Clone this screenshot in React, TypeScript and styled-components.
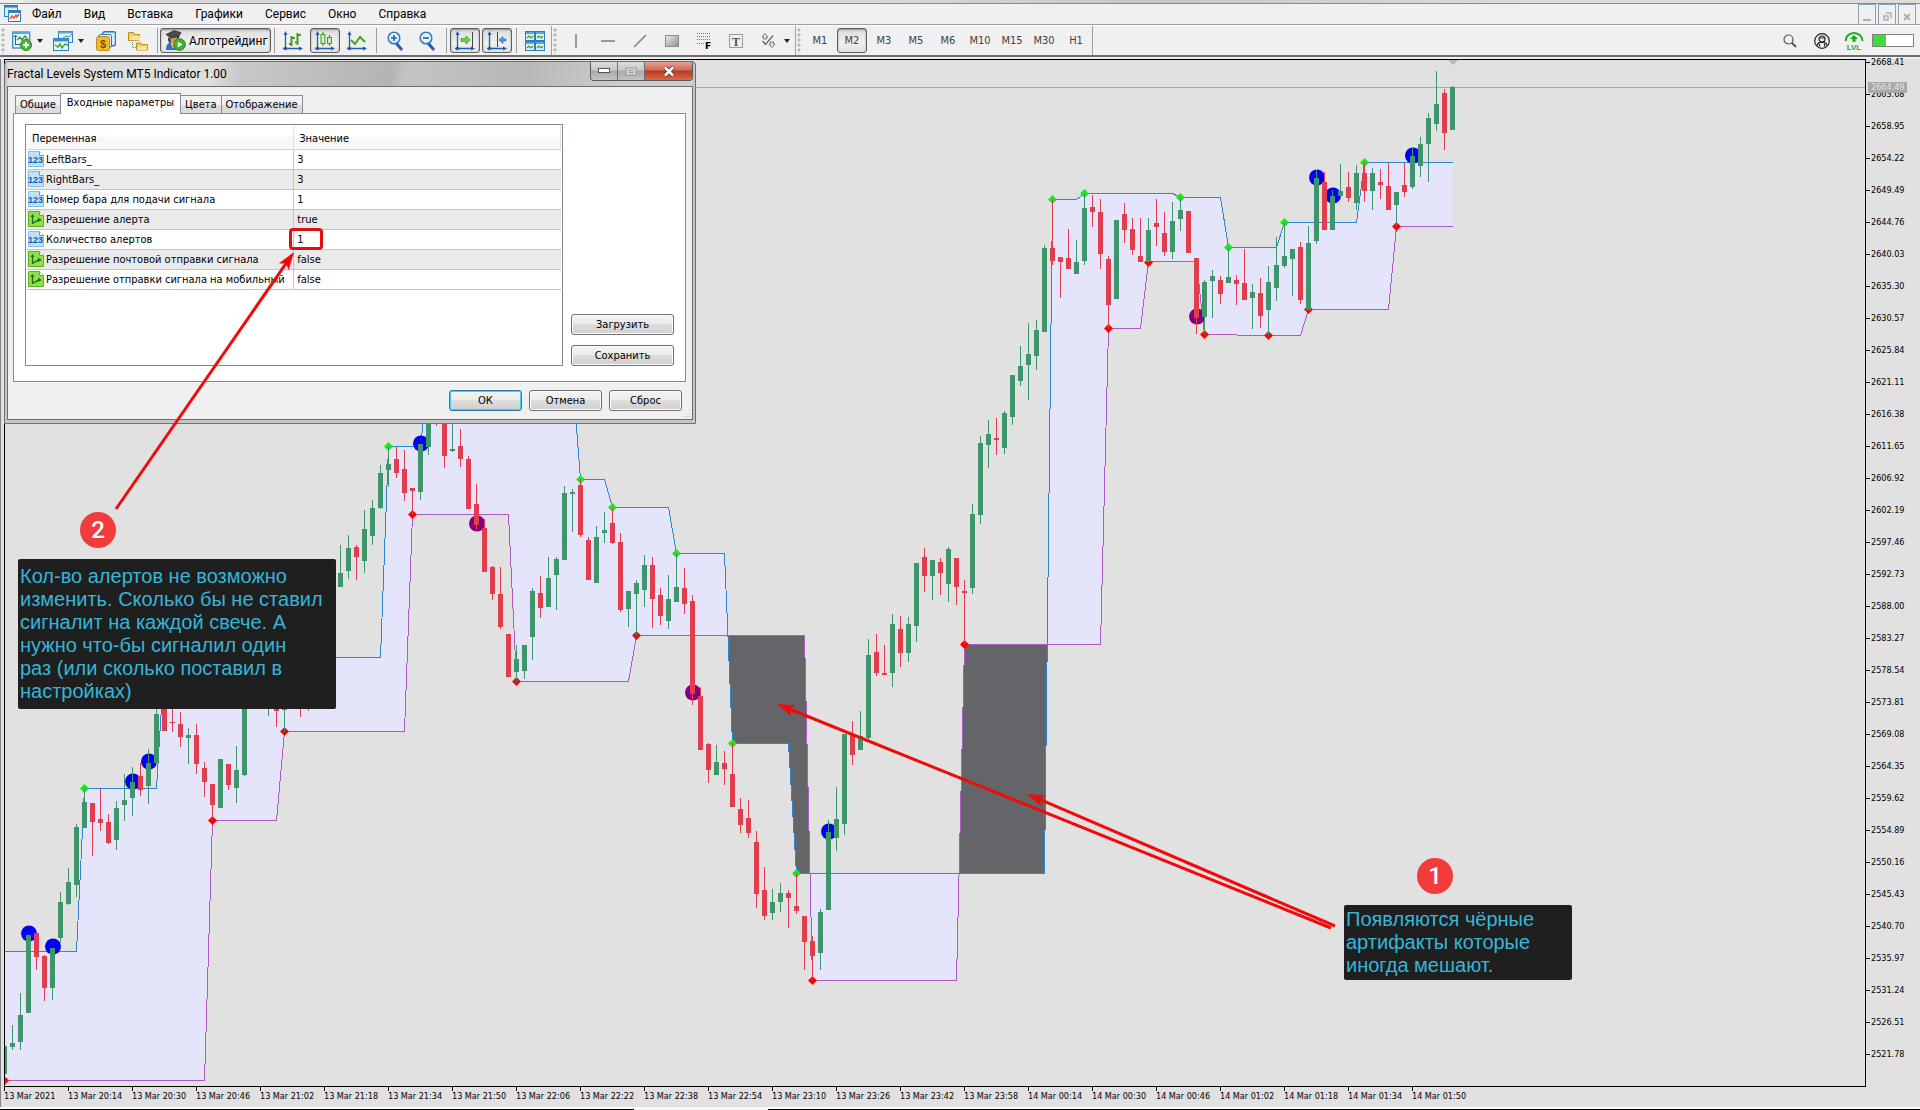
import React from "react";
import styled, { createGlobalStyle, css } from "styled-components";

const uiFont = 'Roboto, "Open Sans", "Noto Sans", sans-serif';
const smallFont = '"DejaVu Sans Condensed", "Noto Sans", sans-serif';
const noteFont = '"Liberation Sans", Arial, sans-serif';

const Global = createGlobalStyle`
  *, *::before, *::after { box-sizing: border-box; }
  html, body { margin: 0; padding: 0; }
  body { background: #f0f0f0; font-family: ${uiFont}; font-size: 12px; color: #000; overflow: hidden; }
  button { font: inherit; color: inherit; margin: 0; padding: 0; background: none; border: 0; }
  ul, ol { list-style: none; margin: 0; padding: 0; }
  svg { display: block; }
`;

/* ---------- data ---------- */

type Candle = [up: 0 | 1, high: number, top: number, bottom: number, low: number] | null;

const FIRST_X = 4;
const STEP = 8;

const candles: Candle[] = [
  [1, 1046, 1046, 1074, 1074], [1, 1025, 1043, 1047, 1050], [1, 993, 1015, 1042, 1050], [1, 935, 935, 1013, 1013],
  [0, 933, 933, 957, 970], [0, 955, 956, 988, 1001], [1, 948, 948, 988, 1000], [1, 892, 902, 938, 943],
  [1, 868, 882, 904, 905], [1, 824, 827, 885, 897], [1, 788, 802, 828, 828], [0, 803, 803, 822, 856],
  [0, 789, 819, 823, 831], [0, 814, 822, 843, 844], [1, 801, 808, 840, 850], [1, 774, 800, 805, 821],
  [1, 767, 782, 798, 816], [0, 763, 776, 790, 796], [1, 749, 763, 786, 804], [1, 700, 714, 763, 763],
  [0, 700, 700, 731, 731], [0, 700, 722, 723, 732], [0, 712, 724, 737, 747], [1, 728, 735, 738, 764],
  [0, 724, 735, 764, 774], [0, 762, 768, 782, 797], [0, 784, 784, 805, 820], [1, 759, 759, 808, 808],
  [0, 764, 764, 785, 790], [1, 746, 770, 788, 803], [1, 690, 690, 775, 776], null,
  null, [1, 690, 690, 700, 716], [0, 700, 700, 711, 727], [1, 700, 700, 710, 731],
  null, [0, 690, 690, 700, 717], [0, 690, 690, 700, 711], null,
  null, null, [1, 545, 573, 587, 587], [1, 535, 548, 571, 579],
  [0, 545, 547, 557, 580], [1, 510, 529, 561, 573], [1, 500, 508, 536, 545], [1, 465, 473, 508, 509],
  [1, 446, 464, 470, 487], [0, 447, 459, 473, 478], [0, 450, 469, 493, 501], [0, 488, 488, 491, 514],
  [1, 444, 444, 492, 500], [1, 410, 410, 447, 455], [0, 405, 405, 415, 426], [0, 410, 410, 456, 468],
  [1, 410, 449, 451, 452], [0, 429, 446, 459, 467], [0, 456, 459, 509, 509], [0, 484, 504, 525, 530],
  [0, 519, 528, 572, 572], [0, 566, 567, 594, 600], [0, 567, 594, 627, 629], [0, 634, 634, 677, 677],
  [1, 645, 659, 672, 681], [1, 645, 645, 671, 679], [1, 588, 591, 637, 660], [0, 576, 593, 608, 618],
  [1, 557, 578, 607, 607], [1, 557, 559, 575, 610], [1, 486, 493, 560, 560], [1, 489, 492, 494, 532],
  [0, 479, 485, 535, 537], [0, 537, 540, 580, 580], [1, 526, 537, 583, 583], [1, 512, 530, 533, 543],
  [0, 507, 523, 543, 544], [0, 533, 542, 610, 612], [1, 591, 591, 609, 627], [1, 580, 583, 594, 635],
  [1, 555, 565, 590, 607], [0, 557, 565, 599, 628], [0, 588, 595, 616, 625], [1, 575, 599, 621, 629],
  [1, 553, 587, 602, 602], [0, 568, 588, 604, 614], [0, 595, 601, 694, 705], [0, 687, 696, 750, 750],
  [0, 743, 744, 770, 783], [1, 745, 762, 775, 775], [0, 751, 763, 769, 785], [0, 743, 774, 807, 807],
  [0, 798, 809, 825, 833], [0, 800, 818, 833, 838], [0, 831, 842, 894, 908], [0, 867, 890, 916, 920],
  [1, 889, 902, 913, 920], [1, 883, 893, 902, 912], [0, 890, 893, 898, 928], [0, 873, 906, 911, 914],
  [0, 916, 916, 942, 970], [0, 936, 941, 956, 980], [1, 909, 912, 953, 970], [1, 820, 832, 910, 910],
  [1, 787, 819, 838, 851], [1, 734, 734, 824, 835], [0, 721, 734, 755, 765], [1, 711, 736, 750, 750],
  [1, 639, 655, 738, 740], [0, 634, 652, 673, 676], [0, 645, 673, 675, 675], [1, 614, 624, 673, 687],
  [0, 616, 629, 653, 667], [1, 617, 624, 653, 662], [1, 563, 563, 626, 642], [0, 548, 557, 576, 592],
  [1, 560, 560, 576, 600], [0, 558, 562, 573, 595], [1, 547, 549, 584, 602], [0, 558, 558, 587, 605],
  [0, 580, 591, 593, 644], [1, 504, 514, 588, 594], [1, 436, 443, 515, 524], [1, 420, 434, 445, 468],
  [0, 418, 438, 440, 455], [1, 411, 413, 448, 454], [1, 375, 375, 417, 425], [1, 346, 366, 381, 386],
  [1, 323, 354, 365, 400], [1, 320, 330, 356, 370], [1, 245, 248, 332, 332], [0, 199, 248, 261, 265],
  [0, 257, 257, 262, 298], [0, 229, 258, 269, 269], [1, 240, 262, 274, 274], [1, 193, 208, 261, 265],
  [0, 195, 207, 212, 227], [0, 199, 212, 254, 269], [0, 256, 259, 305, 328], [1, 220, 220, 299, 299],
  [0, 203, 214, 230, 243], [0, 218, 229, 250, 255], [0, 218, 256, 262, 262], [1, 218, 230, 262, 262],
  [0, 199, 223, 227, 246], [0, 212, 233, 252, 256], [1, 202, 221, 252, 259], [1, 197, 210, 219, 231],
  [0, 211, 211, 253, 253], [0, 258, 258, 318, 334], [1, 280, 282, 317, 334], [1, 270, 276, 281, 318],
  [0, 276, 280, 294, 304], [1, 247, 277, 283, 283], [0, 275, 280, 284, 305], [0, 249, 283, 300, 300],
  [1, 284, 292, 298, 329], [0, 278, 293, 316, 328], [1, 266, 282, 310, 335], [1, 237, 265, 288, 301],
  [1, 222, 256, 266, 268], [1, 249, 249, 259, 296], [0, 242, 247, 300, 304], [1, 226, 243, 310, 310],
  [1, 170, 178, 241, 244], [0, 172, 182, 230, 230], [1, 190, 196, 230, 230], [1, 164, 191, 196, 196],
  [0, 172, 187, 198, 202], [1, 165, 173, 203, 210], [0, 162, 173, 191, 202], [1, 168, 173, 191, 210],
  [0, 169, 182, 185, 199], [0, 163, 186, 210, 210], [1, 192, 192, 205, 226], [0, 163, 185, 192, 197],
  [1, 147, 156, 187, 189], [1, 137, 144, 166, 177], [1, 113, 118, 144, 182], [1, 71, 104, 124, 131],
  [0, 89, 93, 133, 150], [1, 86, 87, 130, 130],
];

type Pt = [number, number];

const upper: Pt[] = [
  [4, 951], [76, 951], [84, 788], [156, 788], [164, 657], [380, 657], [388, 446], [420, 446], [428, 374],
  [572, 374], [580, 479], [604, 479], [612, 507], [668, 507], [676, 553], [724, 553], [732, 743], [788, 743],
  [796, 873], [1044, 873], [1052, 199], [1076, 199], [1084, 193], [1172, 193], [1180, 197], [1220, 197],
  [1228, 247], [1276, 247], [1284, 222], [1356, 222], [1364, 162], [1452, 162],
];

const lower: Pt[] = [
  [4, 1080], [204, 1080], [212, 820], [276, 820], [284, 731], [404, 731], [412, 514], [508, 514], [516, 681],
  [628, 681], [636, 635], [804, 635], [812, 980], [956, 980], [964, 644], [1100, 644], [1108, 328], [1140, 328],
  [1148, 261], [1196, 261], [1204, 334], [1268, 335], [1300, 335], [1308, 309], [1388, 309], [1396, 226], [1452, 226],
];

const cross1: Pt = [727.5, 635];
const cross2: Pt = [809.5, 873];
const cross3: Pt = [958.5, 873];
const cross4: Pt = [1046.7, 644];

const lightZones: Pt[][] = [
  [...upper.slice(0, 16), cross1, ...lower.slice(0, 11).reverse()],
  [cross2, cross3, [956, 980], [812, 980]],
  [cross4, ...upper.slice(20), ...lower.slice(15).reverse()],
];

const darkZones: Pt[][] = [
  [cross1, [804, 635], cross2, [796, 873], [788, 743], [732, 743]],
  [[964, 644], cross4, [1044, 873], cross3],
];

const highs: Pt[] = [
  [84, 788], [388, 446], [580, 479], [612, 507], [676, 553], [732, 743], [796, 873], [1052, 199], [1084, 193],
  [1180, 197], [1228, 247], [1284, 222], [1364, 162],
];

const lows: Pt[] = [
  [4, 1080], [212, 820], [284, 731], [412, 514], [516, 681], [636, 635], [812, 980], [964, 644], [1108, 328],
  [1148, 262], [1204, 334], [1268, 335], [1308, 309], [1396, 226],
];

const buyDots: Pt[] = [
  [29, 933], [53, 946], [133, 781], [149, 761], [421, 443], [829, 831], [1317, 177], [1333, 195], [1413, 155],
];
const sellDots: Pt[] = [[477, 523], [693, 692], [1197, 316]];

const prices = Array.from({ length: 32 }, (_, i) => (2668.41 - i * 4.73).toFixed(2));

const times = Array.from({ length: 23 }, (_, i) => {
  if (i === 0) return "13 Mar 2021";
  const minutes = 20 * 60 + 14 + (i - 1) * 16;
  const day = 13 + Math.floor(minutes / 1440);
  const h = String(Math.floor(minutes / 60) % 24).padStart(2, "0");
  const m = String(minutes % 60).padStart(2, "0");
  return `${day} Mar ${h}:${m}`;
});

/* ---------- frame, menu, toolbar ---------- */

const Page = styled.div`
  position: relative;
  display: flex;
  flex-direction: column;
  height: 100vh;
  background: #f0f0f0;
`;

const TopStrip = styled.div`
  height: 4px;
  background: linear-gradient(90deg, #efefef 0 1%, #d9d9d9 2% 45%, #c6c6c6 60%, #dcdcdc 80%);
  border-bottom: 1px solid #8a8a8a;
`;

const MenuBar = styled.nav`
  display: flex;
  align-items: center;
  height: 21px;
  padding-left: 4px;
  border-bottom: 1px solid #a0a0a0;
`;

const MenuList = styled.ul`
  display: flex;
  gap: 22px;
  margin-left: 10px;
  line-height: 18px;
`;

const MdiButtons = styled.div`
  display: flex;
  align-self: stretch;
  gap: 2px;
  margin-left: auto;
  padding-right: 4px;
  button {
    width: 18px;
    padding-top: 4px;
    border: 1px solid #8ea0b8;
    border-width: 1px 1px 0;
    display: grid;
    place-items: center;
  }
`;

const ToolBar = styled.div`
  display: flex;
  align-items: stretch;
  height: 32px;
  border-top: 1px solid #fff;
  border-bottom: 2px solid #6e6e6e;
`;

const Group = styled.div`
  display: flex;
  align-items: center;
  height: 29px;
  border-right: 1px solid #a0a0a0;
`;

const Grip = styled.span`
  width: 8px;
  height: 27px;
  background: radial-gradient(circle at 3px 3px, #b4b4b4 1px, transparent 2px) 0 0 / 8px 5px;
`;

const pressed = css`
  border: 1px solid #5e5e5e;
  background: linear-gradient(#dcdcdc, #f0f0f0 60%, #e4e4e4);
  box-shadow: inset 0 1px 2px #8c8c8c;
`;

const Tool = styled.button<{ $on?: boolean }>`
  display: grid;
  place-items: center;
  width: 30px;
  height: 25px;
  margin: 0 1px;
  border: 1px solid transparent;
  border-radius: 3px;
  color: #404040;
  font-family: ${smallFont};
  font-size: 11px;
  ${(p) => p.$on && pressed}
`;

const DropTool = styled.button`
  display: flex;
  align-items: center;
  gap: 5px;
  width: 41px;
  height: 25px;
  padding-left: 4px;
`;

const Caret = styled.span`
  border: 3px solid transparent;
  border-top: 4px solid #222;
  border-bottom: 0;
`;

const ShapeTool = styled.button`
  display: flex;
  align-items: center;
  gap: 8px;
  width: 43px;
  height: 25px;
  padding-left: 9px;
`;

const Algo = styled.button`
  display: flex;
  align-items: center;
  gap: 3px;
  width: 111px;
  height: 25px;
  padding-left: 4px;
  border-radius: 3px;
  white-space: nowrap;
  ${pressed}
`;

const Sep = styled.span`
  width: 6px;
  height: 25px;
  background: linear-gradient(90deg, transparent 3px, #9c9c9c 3px 4px, transparent 4px);
`;

const Status = styled.div`
  display: flex;
  align-items: center;
  margin-left: auto;
  padding-right: 6px;
`;

const Battery = styled.span`
  width: 42px;
  height: 13px;
  margin-left: 2px;
  border: 1px solid #808080;
  background: linear-gradient(90deg, #3fdc3f 13px, #fff 13px);
`;

/* ---------- chart ---------- */

const ChartFrame = styled.main`
  flex: 1;
  min-height: 0;
  display: grid;
  grid-template-columns: minmax(0, 1fr) 54px;
  grid-template-rows: minmax(0, 1fr) 20px;
  margin-top: 2px;
  padding-left: 3px;
  background: #e1e1e1;
  border-left: 1px solid #808080;
`;

const BottomEdge = styled.div`
  height: 3px;
  border-top: 2px solid #f8f8f8;
  background: linear-gradient(90deg, #000 33%, #f8f8f8 33% 40%, #000 40%);
`;

const Plot = styled.div`
  border: 1px solid #000;
  overflow: hidden;
  svg { width: 100%; height: 100%; }
`;

const PriceAxis = styled.div`
  position: relative;
  font-family: ${smallFont};
  font-size: 9px;
  ol { margin-top: -13px; }
  li { display: flex; align-items: center; gap: 1px; height: 32px; line-height: 10px; }
  li::before { content: ""; width: 4px; height: 1px; background: #000; }
`;

const CurrentPrice = styled.output`
  position: absolute;
  left: 2px;
  top: 23px;
  width: 39px;
  height: 11px;
  padding-left: 3px;
  line-height: 11px;
  background: #a9a9a9;
  color: #e1e1e1;
`;

const TimeAxis = styled.ol`
  grid-column: 1 / -1;
  display: flex;
  font-family: ${smallFont};
  font-size: 9px;
  line-height: 10px;
  white-space: nowrap;
  li { width: 64px; }
  li::before { content: ""; display: block; width: 1px; height: 4px; background: #000; }
`;

/* ---------- dialog ---------- */

const Dialog = styled.section`
  position: absolute;
  left: 4px;
  top: 61px;
  width: 692px;
  padding: 0 2px 3px;
  border: 1px solid #707070;
  border-radius: 4px 4px 0 0;
  background: #c6c6c6;
`;

const TitleBar = styled.header`
  display: flex;
  align-items: flex-start;
  justify-content: space-between;
  height: 24px;
  background: linear-gradient(100deg, #dedede 0 30%, #c8c8c8 34%, #b4b4b4 56%, #c4c4c4 58%, #b8b8b8 75%, #cccccc 90%);
  h1 { margin: 0; font-size: 12px; line-height: 24px; font-weight: 400; }
`;

const WindowButtons = styled.div`
  display: flex;
  height: 19px;
  border: 1px solid #5a5a5a;
  border-top: 0;
  border-radius: 0 0 4px 4px;
  overflow: hidden;
`;

const WindowButton = styled.button<{ $close?: boolean }>`
  display: grid;
  place-items: center;
  width: ${(p) => (p.$close ? 47 : 27)}px;
  border-right: ${(p) => (p.$close ? 0 : 1)}px solid #6c6c6c;
  background: ${(p) =>
    p.$close
      ? "linear-gradient(#e2a095, #cf6a58 45%, #b93a20 50%, #d9684a)"
      : "linear-gradient(#dcdcdc, #c8c8c8 45%, #a8a8a8 50%, #c4c4c4)"};
`;

const DialogBody = styled.div`
  position: relative;
  display: flex;
  flex-direction: column;
  padding: 6px 6px 8px 5px;
  border: 1px solid #6c6c6c;
  background: #f0f0f0;
  font-family: ${smallFont};
  font-size: 11px;
`;

const Tabs = styled.div`
  display: flex;
  align-items: flex-end;
  padding-left: 2px;
`;

const Tab = styled.button<{ $active?: boolean }>`
  height: ${(p) => (p.$active ? 21 : 18)}px;
  margin-bottom: ${(p) => (p.$active ? -1 : 0)}px;
  padding: 0 ${(p) => (p.$active ? 6 : 4)}px ${(p) => (p.$active ? 3 : 0)}px;
  border: 1px solid #898c95;
  border-bottom: 0;
  margin-right: -1px;
  background: ${(p) => (p.$active ? "#fff" : "linear-gradient(#f2f2f2 50%, #dcdcdc 50%)")};
  z-index: ${(p) => (p.$active ? 1 : 0)};
`;

const TabPanel = styled.div`
  display: flex;
  gap: 8px;
  height: 269px;
  padding: 10px 11px 15px;
  border: 1px solid #898c95;
  background: #fff;
`;

const GridBox = styled.div`
  flex: 1;
  padding: 1px;
  border: 1px solid #828790;
`;

const Params = styled.table`
  width: 100%;
  border-collapse: collapse;
  table-layout: fixed;
  th {
    height: 23px;
    padding: 2px 5px 0;
    font-weight: 400;
    text-align: left;
    border-right: 1px solid #e2e3e5;
    border-bottom: 1px solid #d5d5d5;
    background: linear-gradient(#fff 45%, #f6f7f8 50%);
  }
  td {
    height: 20px;
    padding: 0 3px;
    border-bottom: 1px solid #c4c4c4;
    white-space: nowrap;
    overflow: hidden;
  }
  td:first-child { border-right: 1px solid #c4c4c4; padding: 0 1px; }
  tr:nth-child(even) td { background: #eaeaea; }
`;

const NameCell = styled.span`
  display: flex;
  align-items: center;
  gap: 2px;
`;

const Side = styled.div`
  display: flex;
  flex-direction: column;
  justify-content: flex-end;
  gap: 10px;
  width: 103px;
`;

const PushButton = styled.button<{ $primary?: boolean }>`
  height: 21px;
  min-width: 73px;
  border: 1px solid #707070;
  border-radius: 3px;
  background: linear-gradient(#f4f4f4, #ebebeb 48%, #dddddd 50%, #cfcfcf);
  box-shadow: inset 0 0 0 1px #fbfbfb;
  ${(p) =>
    p.$primary &&
    css`
      border-color: #2c7ba8;
      box-shadow: inset 0 0 0 1px #3fd0f8;
    `}
`;

const Footer = styled.footer`
  display: flex;
  justify-content: flex-end;
  gap: 7px;
  padding: 8px 4px 0 0;
`;

const SizeGrip = styled.span`
  position: absolute;
  right: 1px;
  bottom: 1px;
  width: 9px;
  height: 9px;
  clip-path: polygon(100% 0, 100% 100%, 0 100%);
  background: radial-gradient(circle, #a8a8a8 1px, transparent 1px) 0 0 / 3px 3px;
`;

/* ---------- annotations ---------- */

const Overlay = styled.svg`
  position: absolute;
  inset: 0;
  width: 100%;
  height: 100%;
  pointer-events: none;
`;

const Note = styled.p<{ $x: number; $y: number; $w: number; $h: number }>`
  position: absolute;
  left: ${(p) => p.$x}px;
  top: ${(p) => p.$y}px;
  display: flex;
  align-items: center;
  width: ${(p) => p.$w}px;
  height: ${(p) => p.$h}px;
  margin: 0;
  padding: 0 2px;
  border-radius: 2px;
  background: #1f1f1f;
  color: #35b6d8;
  font-family: ${noteFont};
  font-size: 20px;
  line-height: 23px;
  white-space: pre-line;
`;

const Badge = styled.span<{ $x: number; $y: number }>`
  position: absolute;
  left: ${(p) => p.$x}px;
  top: ${(p) => p.$y}px;
  width: 36px;
  height: 36px;
  border-radius: 50%;
  background: #f23c3c;
  color: #fff;
  font: 500 24px/36px ${uiFont};
  text-align: center;
`;

const Highlight = styled.span`
  position: absolute;
  left: 289px;
  top: 228px;
  width: 34px;
  height: 22px;
  border: 3px solid #e01010;
  border-radius: 4px;
`;

/* ---------- icons ---------- */

const NAVY = "#1f5fae";
const LEAF = "#3f9f1f";

const AppIcon = () => (
  <svg width="18" height="18" viewBox="0 0 18 18">
    <rect x=".5" y=".5" width="13" height="11" fill="#d9ecfb" stroke="#2a80c0" />
    <rect x=".5" y=".5" width="13" height="2" fill="#2a80c0" />
    <rect x="4.500" y="5.500" width="12" height="11" fill="#fff" stroke="#2a80c0" />
    <rect x="4" y="5" width="13" height="3" fill="#2a80c0" />
    <path d="M6 14l2-3 2 2 2-3 1 2 2-3" fill="none" stroke="#e8542c" strokeWidth="1.500" />
  </svg>
);

const NewChart = () => (
  <svg width="20" height="20" viewBox="0 0 20 20">
    <rect x=".7" y="1" width="17" height="16" fill="#e6f4fd" stroke="#2b7fc0" strokeWidth="1.200" />
    <rect x=".7" y="1" width="17" height="2" fill="#5aa7dc" />
    <path d="M3.500 14V5M2 6l1.500-2L5 6M3 13.500h7" stroke={NAVY} fill="none" />
    <path d="M5 9l3-3 2 3 3-4 3 4" stroke={LEAF} strokeWidth="1.400" fill="none" />
    <circle cx="14" cy="14" r="5.500" fill="#4db83a" stroke="#2c8a20" />
    <path d="M14 11v6M11 14h6" stroke="#fff" strokeWidth="2" />
  </svg>
);

const Profiles = () => (
  <svg width="20" height="20" viewBox="0 0 20 20">
    <rect x="5.500" y=".5" width="14" height="11" fill="#e6f4fd" stroke="#2b7fc0" />
    <rect x="5.500" y=".5" width="14" height="2" fill="#5aa7dc" />
    <path d="M9 8l4-3 3 1 3-3" stroke={LEAF} fill="none" />
    <rect x=".5" y="7.500" width="15" height="12" fill="#e6f4fd" stroke="#2b7fc0" />
    <rect x=".5" y="7.500" width="15" height="3" fill="#3b8fd0" />
    <path d="M2 14l3 2 2-3 2 4 3-4 3 1" stroke={LEAF} strokeWidth="1.400" fill="none" />
  </svg>
);

const Market = () => (
  <svg width="20" height="20" viewBox="0 0 20 20">
    <rect x="6.500" y=".8" width="13" height="14" rx="2" fill="#d8ecfa" stroke="#2878bd" strokeWidth="1.400" />
    <rect x="2.500" y="3.500" width="13" height="13" rx="2" fill="#eaf5fc" stroke="#2878bd" />
    <rect x=".6" y="5.600" width="13" height="14" rx="2" fill="#f3bd2f" stroke="#b98412" />
    <text x="7" y="16.500" fontSize="11" fontWeight="700" fontFamily="Liberation Sans, sans-serif" textAnchor="middle" fill="#7a5300">$</text>
  </svg>
);

const Folders = () => (
  <svg width="20" height="20" viewBox="0 0 20 20">
    <path d="M.5 1.500h5l1 2h5v6H.500z" fill="#f0cc5a" stroke="#b8912a" />
    <path d="M1 9l2-4h10l-1 4.500z" fill="#fbe493" />
    <path d="M8.500 12h4l1 1.500h6V19h-11z" fill="#f0cc5a" stroke="#b8912a" />
    <path d="M9 19l1-3.500h9.500L18.500 19z" fill="#fbe493" />
    <path d="M4.500 11v5.500H8" stroke="#777" strokeDasharray="1 1" fill="none" />
  </svg>
);

const AlgoIcon = () => (
  <svg width="21" height="21" viewBox="0 0 21 21">
    <path d="M1 20c0-6 3-8 6-8s7 2 7 8z" fill="#2372d6" />
    <path d="M5 12l3 7 3-7z" fill="#f0c33c" />
    <circle cx="8.500" cy="8.500" r="4" fill="#c79a62" />
    <path d="M3 8c0 5 2 5 3 5L5 7l7-1v3l2-1V4z" fill="#4b3b2a" />
    <path d="M1 4.500L9 .5l7 2-2 4-8 1.500z" fill="#4a4a4a" stroke="#222" strokeWidth=".6" />
    <circle cx="14.500" cy="14.500" r="5.800" fill="#3fb52c" stroke="#218416" />
    <path d="M12.800 11.500v6l4.700-3z" fill="#fff" />
  </svg>
);

const Axes = ({ children }: { children?: React.ReactNode }) => (
  <svg width="20" height="20" viewBox="0 0 20 20">
    <path d="M2.500 19V2M0 17.500h18" stroke={NAVY} strokeWidth="1.300" fill="none" />
    <path d="M.5 4l2-4 2 4zM16 15.500l4 2-4 2z" fill={NAVY} />
    <circle cx="2.500" cy="17.500" r="1.800" fill={NAVY} />
    {children}
  </svg>
);

const BarsIcon = () => (
  <Axes>
    <path d="M8.500 5v10M6 13h2.500M8.500 7H12M14.500 2v12M12 11.500h2.500M14.500 4H18" stroke={LEAF} strokeWidth="2" fill="none" />
  </Axes>
);

const CandlesIcon = () => (
  <Axes>
    <path d="M8 1v14M14.500 4v11" stroke={LEAF} strokeWidth="1.200" />
    <rect x="6" y="3.500" width="4" height="9" fill="#c7f0b4" stroke={LEAF} />
    <rect x="12.500" y="6.500" width="4" height="6" fill="#c7f0b4" stroke={LEAF} />
  </Axes>
);

const LineIcon = () => (
  <Axes>
    <path d="M4 9l4 4 5-7 5 5" stroke={LEAF} strokeWidth="1.800" fill="none" />
  </Axes>
);

const ShiftEnd = () => (
  <Axes>
    <path d="M17.500 1v15" stroke="#444" />
    <path d="M6 7.500h5V5l4.500 4-4.500 4v-2.500H6z" fill="#6fd05a" stroke={LEAF} strokeWidth=".8" />
  </Axes>
);

const ShiftBack = () => (
  <Axes>
    <path d="M10.500 1v15" stroke="#444" />
    <path d="M19 8h-3V5.500L12 9l4 3.500V10h3z" fill="#4a9ae8" stroke={NAVY} strokeWidth=".6" />
  </Axes>
);

const Zoomer = ({ plus }: { plus?: boolean }) => (
  <svg width="18" height="20" viewBox="0 0 18 20">
    <path d="M10 12l6 7" stroke="#2a5ca8" strokeWidth="3" />
    <circle cx="8" cy="7" r="5.800" fill="#e6f5ff" stroke="#2f78c8" strokeWidth="1.500" />
    <path d={plus ? "M5 7h6M8 4v6" : "M5 7h6"} stroke="#1f5fae" strokeWidth="1.600" />
  </svg>
);

const Tiles = () => (
  <svg width="20" height="20" viewBox="0 0 20 20">
    {[0, 10].map((x) =>
      [0, 10].map((y) => (
        <g key={`${x}-${y}`} transform={`translate(${x} ${y})`}>
          <rect x=".5" y=".5" width="9" height="9" fill="#dff0fc" stroke="#2b7fc0" />
          <rect x="1" y="1" width="8" height="2" fill="#5aa7dc" />
          <path d="M2 7l2-2 2 2 2-2" stroke={LEAF} fill="none" strokeWidth="1.200" />
        </g>
      ))
    )}
  </svg>
);

const GRAY = "#7c7c7c";

const VLine = () => <svg width="16" height="16"><path d="M8 1v14" stroke={GRAY} strokeWidth="1.500" /></svg>;
const HLine = () => <svg width="16" height="16"><path d="M1 8h14" stroke={GRAY} strokeWidth="1.500" /></svg>;
const Slope = () => <svg width="16" height="16"><path d="M2 14L14 2" stroke={GRAY} strokeWidth="1.500" /></svg>;
const Box = () => (
  <svg width="16" height="16">
    <defs><linearGradient id="bx" x1="0" y1="0" x2="1" y2="1"><stop offset="0" stopColor="#efefef" /><stop offset="1" stopColor="#8c8c8c" /></linearGradient></defs>
    <rect x="1.500" y="2.500" width="13" height="11" fill="url(#bx)" stroke="#8a8a8a" />
  </svg>
);
const Fibo = () => (
  <svg width="16" height="18">
    <path d="M1 1.500h13M1 4.500h13M1 7.500h13M1 11.500h7" stroke="#777" strokeDasharray="1 1" />
    <text x="9" y="17" fontSize="9" fontWeight="700" fontFamily="DejaVu Sans, sans-serif">F</text>
  </svg>
);
const TextIcon = () => (
  <svg width="16" height="16">
    <rect x="1.500" y="1.500" width="13" height="13" fill="none" stroke="#444" strokeDasharray="1 1" />
    <text x="8" y="12.500" fontSize="12" fontWeight="700" textAnchor="middle" fill="#555" fontFamily="Liberation Serif, serif">T</text>
  </svg>
);
const Shapes = () => (
  <svg width="15" height="15" viewBox="0 0 15 15">
    <path d="M4 .5L7 4H5.500v2h-3V4H1zM11 14.500L8 11h1.500V9h3v2H14z" fill="#e8e8e8" stroke="#777" />
    <path d="M1.500 8l3 3.500L12 2.500" stroke="#666" strokeWidth="1.300" fill="none" />
  </svg>
);

const SearchIcon = () => (
  <svg width="14" height="14" viewBox="0 0 14 14">
    <circle cx="5.500" cy="5.500" r="4.500" fill="none" stroke="#555" strokeWidth="1.200" />
    <path d="M8.800 8.800L13 13" stroke="#555" strokeWidth="2" />
  </svg>
);
const Person = () => (
  <svg width="16" height="16" viewBox="0 0 16 16" fill="none" stroke="#222" strokeWidth="1.200">
    <circle cx="8" cy="8" r="7.300" />
    <circle cx="8" cy="6" r="3" />
    <path d="M3 12.500c1-4 3-3 5-3s4-1 5 3M5.500 13.500V11M10.500 13.500V11M6 5h4" />
  </svg>
);
const Level = () => (
  <svg width="20" height="20" viewBox="0 0 20 20">
    <path d="M1.500 10a8.500 8 0 0 1 17 0" fill="none" stroke="#12b012" strokeWidth="2" />
    <path d="M10 4l4 4h-2.500v3h-3V8H6z" fill="#12b012" />
    <text x="10" y="19" fontSize="8" fontWeight="700" textAnchor="middle" fill="#12b012" fontFamily="Liberation Sans, sans-serif">LVL</text>
  </svg>
);

const NumberIcon = () => (
  <svg width="16" height="16" viewBox="0 0 16 16">
    <path d="M.5.500h11l4 4v11H.500z" fill="#bfe2f8" stroke="#7cc0ec" />
    <path d="M11.500.500v4h4" fill="#fff" stroke="#4aa4dd" />
    <text x="7.500" y="11.500" fontSize="9" fontWeight="700" textAnchor="middle" fill="#1858b0" fontFamily="Liberation Sans, sans-serif">123</text>
  </svg>
);
const BoolIcon = () => (
  <svg width="16" height="16" viewBox="0 0 16 16">
    <path d="M.5.500h11l4 4v11H.500z" fill="#8fe04a" stroke="#5fae24" />
    <path d="M11.500.500v4h4" fill="#fff" stroke="#5fae24" />
    <path d="M4.500 13V5M4.500 12c3 0 3-3 8-3" stroke="#1c6e10" strokeWidth="1.300" fill="none" />
    <path d="M2.500 6l2-3 2 3zM10 6.500l3.500 2.500-3.500 2z" fill="#1c6e10" />
  </svg>
);

/* ---------- chart drawing ---------- */

const poly = (pts: Pt[]) => pts.map(([x, y]) => `${x + 0.5},${y + 0.5}`).join(" ");

const Diamond = ({ at: [x, y], fill }: { at: Pt; fill: string }) => (
  <path d={`M${x + 0.5} ${y - 4}l4.500 4.500-4.500 4.500-4.500-4.500z`} fill={fill} />
);

const Chart = () => (
  <svg role="img" aria-label="M2">
    <g transform="translate(-5 -60)">
      <path d="M0 87.500H1900" stroke="#a9a9a9" />
      <path d="M1448 60h10l-5 5z" fill="#b8b8b8" />
      {lightZones.map((z, i) => <polygon key={i} points={poly(z)} fill="#e4e5fa" />)}
      {darkZones.map((z, i) => <polygon key={i} points={poly(z)} fill="#646569" />)}
      <g fill="none" shapeRendering="crispEdges">
        <polyline points={poly(upper)} stroke="#2f86d6" />
        <polyline points={poly(lower)} stroke="#ab5bc3" />
      </g>
      {highs.map((p) => <Diamond key={p[0]} at={p} fill="#14f014" />)}
      {lows.map((p) => <Diamond key={p[0]} at={p} fill="#f40606" />)}
      {buyDots.map(([x, y]) => <circle key={x} cx={x} cy={y + 0.5} r="8" fill="#0000fa" />)}
      {sellDots.map(([x, y]) => <circle key={x} cx={x} cy={y + 0.5} r="8" fill="#800080" />)}
      <g shapeRendering="crispEdges">
        {candles.map((c, i) => {
          if (!c) return null;
          const [up, h, t, b, l] = c;
          const x = FIRST_X + i * STEP;
          return (
            <g key={i} fill={up ? "#3f956b" : "#e13d4f"}>
              <rect x={x} y={h} width="1" height={l - h} />
              <rect x={x - 2} y={t} width="5" height={b - t} />
            </g>
          );
        })}
      </g>
    </g>
  </svg>
);

const Arrow = ({ from, to }: { from: Pt; to: Pt }) => {
  const angle = (Math.atan2(to[1] - from[1], to[0] - from[0]) * 180) / Math.PI;
  const length = Math.hypot(to[0] - from[0], to[1] - from[1]);
  return (
    <g transform={`translate(${to[0]} ${to[1]}) rotate(${angle})`} fill="#f00a0a">
      <rect x={-length} y="-1.500" width={length - 12} height="3" />
      <path d="M0 0L-18 6l4-6-4-6z" />
    </g>
  );
};

/* ---------- page ---------- */

const rows: [string, string, boolean][] = [
  ["LeftBars_", "3", true],
  ["RightBars_", "3", true],
  ["Номер бара для подачи сигнала", "1", true],
  ["Разрешение алерта", "true", false],
  ["Количество алертов", "1", true],
  ["Разрешение почтовой отправки сигнала", "false", false],
  ["Разрешение отправки сигнала на мобильный", "false", false],
];

const frames = ["M1", "M2", "M3", "M5", "M6", "M10", "M15", "M30", "H1"];

export default function App() {
  return (
    <Page>
      <Global />
      <TopStrip />
      <MenuBar>
        <AppIcon />
        <MenuList>
          {["Файл", "Вид", "Вставка", "Графики", "Сервис", "Окно", "Справка"].map((m) => (
            <li key={m}><button>{m}</button></li>
          ))}
        </MenuList>
        <MdiButtons>
          <button aria-label="Свернуть"><svg width="8" height="8"><path d="M0 7h8" stroke="#b0b0b0" strokeWidth="2" /></svg></button>
          <button aria-label="Восстановить"><svg width="9" height="9"><path d="M3 1h5v5M1 4h4v4H1z" fill="none" stroke="#b0b0b0" strokeWidth="1.500" /></svg></button>
          <button aria-label="Закрыть"><svg width="8" height="8"><path d="M1 1l6 6M7 1L1 7" stroke="#b0b0b0" strokeWidth="2" /></svg></button>
        </MdiButtons>
      </MenuBar>

      <ToolBar>
        <Group>
          <Grip />
          <DropTool aria-label="Новый график"><NewChart /><Caret /></DropTool>
          <DropTool aria-label="Профили"><Profiles /><Caret /></DropTool>
          <Tool aria-label="Обзор рынка"><Market /></Tool>
          <Tool aria-label="Навигатор"><Folders /></Tool>
          <Sep />
          <Algo><AlgoIcon />Алготрейдинг</Algo>
          <Sep />
          <Tool aria-label="Бары"><BarsIcon /></Tool>
          <Tool $on aria-label="Свечи"><CandlesIcon /></Tool>
          <Tool aria-label="Линия"><LineIcon /></Tool>
          <Sep />
          <Tool aria-label="Увеличить"><Zoomer plus /></Tool>
          <Tool aria-label="Уменьшить"><Zoomer /></Tool>
          <Sep />
          <Tool $on aria-label="Автопрокрутка"><ShiftEnd /></Tool>
          <Tool $on aria-label="Сдвиг графика"><ShiftBack /></Tool>
          <Sep />
          <Tool aria-label="Окна"><Tiles /></Tool>
        </Group>
        <Group>
          <Grip />
          <Tool aria-label="Вертикальная линия"><VLine /></Tool>
          <Tool aria-label="Горизонтальная линия"><HLine /></Tool>
          <Tool aria-label="Трендовая линия"><Slope /></Tool>
          <Tool aria-label="Прямоугольник"><Box /></Tool>
          <Tool aria-label="Фибоначчи"><Fibo /></Tool>
          <Tool aria-label="Текст"><TextIcon /></Tool>
          <ShapeTool aria-label="Объекты"><Shapes /><Caret /></ShapeTool>
        </Group>
        <Group>
          <Grip />
          {frames.map((f) => <Tool key={f} $on={f === "M2"}>{f}</Tool>)}
        </Group>
        <Status>
          <Tool aria-label="Поиск"><SearchIcon /></Tool>
          <Tool aria-label="Профиль"><Person /></Tool>
          <Tool aria-label="Уровень"><Level /></Tool>
          <Battery />
        </Status>
      </ToolBar>

      <ChartFrame>
        <Plot><Chart /></Plot>
        <PriceAxis>
          <ol>{prices.map((p) => <li key={p}>{p}</li>)}</ol>
          <CurrentPrice>2664.49</CurrentPrice>
        </PriceAxis>
        <TimeAxis>{times.map((t) => <li key={t}>{t}</li>)}</TimeAxis>
      </ChartFrame>
      <BottomEdge />

      <Dialog role="dialog" aria-labelledby="dlg-title">
        <TitleBar>
          <h1 id="dlg-title">Fractal Levels System MT5 Indicator 1.00</h1>
          <WindowButtons>
            <WindowButton aria-label="Свернуть"><svg width="12" height="6"><rect x=".5" y=".5" width="11" height="4" fill="#fff" stroke="#555" /></svg></WindowButton>
            <WindowButton aria-label="Развернуть"><svg width="12" height="9"><rect x="1" y="1" width="10" height="7" fill="#d8d8d8" stroke="#999" /><rect x="4" y="3.500" width="4" height="2" fill="none" stroke="#999" /></svg></WindowButton>
            <WindowButton $close aria-label="Закрыть"><svg width="12" height="11"><path d="M2 1.500l8 8M10 1.500l-8 8" stroke="#503030" strokeWidth="4" /><path d="M2 1.500l8 8M10 1.500l-8 8" stroke="#fff" strokeWidth="2.500" /></svg></WindowButton>
          </WindowButtons>
        </TitleBar>
        <DialogBody>
          <Tabs role="tablist">
            <Tab role="tab">Общие</Tab>
            <Tab role="tab" $active aria-selected>Входные параметры</Tab>
            <Tab role="tab">Цвета</Tab>
            <Tab role="tab">Отображение</Tab>
          </Tabs>
          <TabPanel role="tabpanel">
            <GridBox>
              <Params>
                <thead><tr><th>Переменная</th><th>Значение</th></tr></thead>
                <tbody>
                  {rows.map(([name, value, num]) => (
                    <tr key={name}>
                      <td><NameCell>{num ? <NumberIcon /> : <BoolIcon />}{name}</NameCell></td>
                      <td>{value}</td>
                    </tr>
                  ))}
                </tbody>
              </Params>
            </GridBox>
            <Side>
              <PushButton>Загрузить</PushButton>
              <PushButton>Сохранить</PushButton>
            </Side>
          </TabPanel>
          <Footer>
            <PushButton $primary>ОК</PushButton>
            <PushButton>Отмена</PushButton>
            <PushButton>Сброс</PushButton>
          </Footer>
          <SizeGrip />
        </DialogBody>
      </Dialog>

      <Highlight />
      <Overlay>
        <Arrow from={[116, 509]} to={[294, 252]} />
        <Arrow from={[1331, 928]} to={[777, 704]} />
        <Arrow from={[1335, 926]} to={[1027, 794]} />
      </Overlay>
      <Badge $x={80} $y={512}>2</Badge>
      <Note $x={18} $y={559} $w={318} $h={150}>
        {"Кол-во алертов не возможно\nизменить. Сколько бы не ставил\nсигналит на каждой свече. А\nнужно что-бы сигналил один\nраз (или сколько поставил в\nнастройках)"}
      </Note>
      <Badge $x={1417} $y={858}>1</Badge>
      <Note $x={1344} $y={905} $w={228} $h={75}>
        {"Появляются чёрные\nартифакты которые\nиногда мешают."}
      </Note>
    </Page>
  );
}
